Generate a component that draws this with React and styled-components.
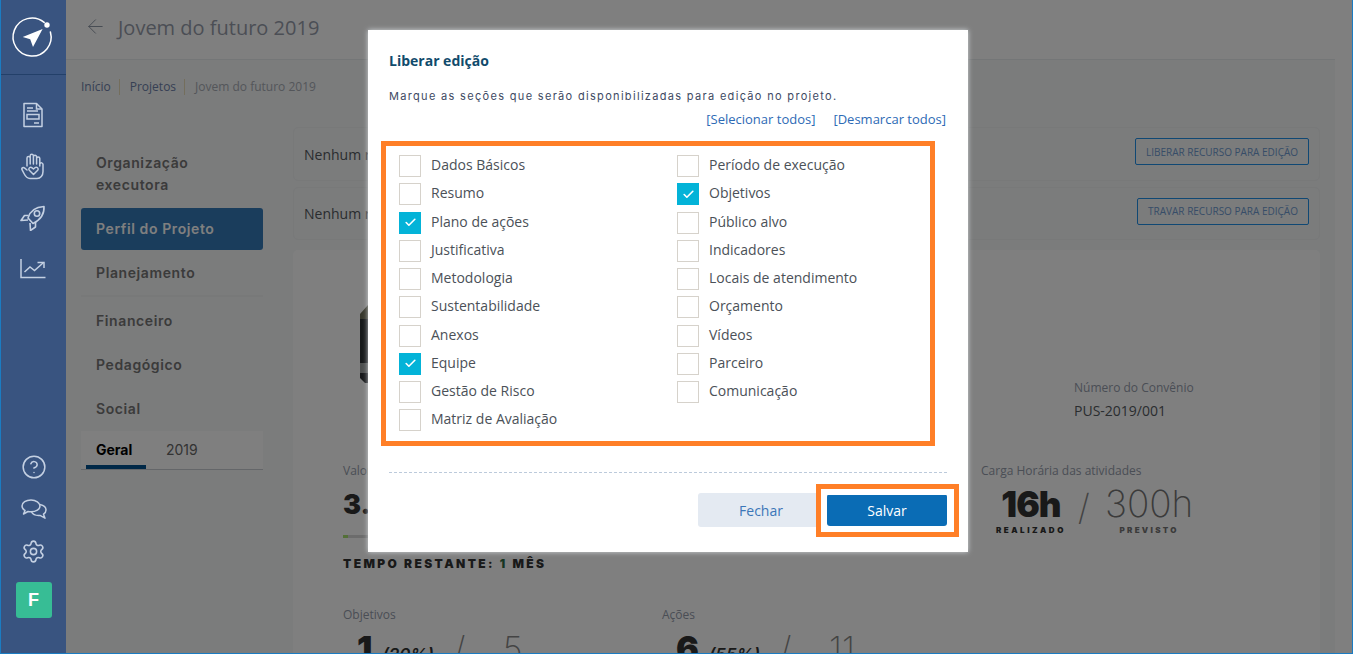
import React from 'react';
import styled, { createGlobalStyle } from 'styled-components';
import { ArrowLeft, Check, CircleHelp, Settings } from 'lucide-react';

const headingFont = `'Inter', 'Liberation Sans', sans-serif`;

const GlobalStyle = createGlobalStyle`
  html, body {
    margin: 0;
    padding: 0;
    height: 100%;
    overflow: hidden;
    font-family: 'Open Sans', 'Liberation Sans', sans-serif;
  }
  * {
    box-sizing: border-box;
  }
`;

const Frame = styled('div')`
  position: relative;
  width: 1353px;
  height: 654px;
  display: flex;
  overflow: hidden;
  background-color: #ffffff;
  border: 1px solid #1b7cc2;
  border-top: none;
`;

const Sidebar = styled('aside')`
  position: relative;
  z-index: 3;
  width: 65px;
  flex-shrink: 0;
  display: flex;
  flex-direction: column;
  align-items: center;
  background-color: #395480;
  color: #c4d0e2;
`;

const LogoBox = styled('div')`
  width: 100%;
  height: 75px;
  display: flex;
  align-items: center;
  justify-content: center;
  padding-right: 3px;
  border-bottom: 1px solid #234069;
`;

const NavIcons = styled('div')`
  display: flex;
  flex-direction: column;
  align-items: center;
  padding: 21px 2px 0 0;
  gap: 13.3px;
`;

const NavIcon = styled('div')`
  width: 36px;
  height: 38px;
  display: flex;
  align-items: center;
  justify-content: center;
`;

const BottomIcons = styled('div')`
  margin-top: auto;
  padding-bottom: 35px;
  display: flex;
  flex-direction: column;
  align-items: center;
`;

const BottomIcon = styled('div')`
  height: 42px;
  display: flex;
  align-items: center;
  justify-content: center;
`;

const Avatar = styled('div')`
  width: 36px;
  height: 36px;
  margin-top: 10px;
  border-radius: 3px;
  background-color: #37bd95;
  color: #ffffff;
  display: flex;
  align-items: center;
  justify-content: center;
  font-family: 'Liberation Sans', sans-serif;
  font-size: 18px;
  font-weight: 700;
`;

const Content = styled('main')`
  width: 1269px;
  flex-shrink: 0;
  display: flex;
  flex-direction: column;
  background-color: #f6f8f9;
`;

const Header = styled('header')`
  height: 60px;
  flex-shrink: 0;
  display: flex;
  align-items: center;
  gap: 11px;
  padding: 0 0 4px 18px;
  background-color: #ffffff;
  border-bottom: 1px solid #e9edef;
  color: #8c96a5;
`;

const BackIcon = styled(ArrowLeft)`
  margin-top: -3px;
`;

const PageTitle = styled('h1')`
  margin: 0;
  font-size: 20px;
  font-weight: 400;
  color: #979dab;
`;

const Breadcrumb = styled('nav')`
  height: 67px;
  flex-shrink: 0;
  display: flex;
  align-items: flex-start;
  padding: 19px 0 0 15px;
  font-size: 12px;
  line-height: 16px;
`;

const Crumb = styled('span')`
  padding-right: 8px;
  margin-right: 10px;
  color: ${p => (p.$current ? '#a8adb5' : '#6d80a8')};
  border-right: ${p => (p.$current ? 'none' : '1px solid #e8dcb8')};
`;

const Columns = styled('div')`
  display: flex;
  flex-shrink: 0;
  padding-left: 15px;
`;

const SideMenu = styled('div')`
  width: 182px;
  flex-shrink: 0;
  padding-top: 14px;
  display: flex;
  flex-direction: column;
`;

const MenuItem = styled('div')`
  font-family: ${headingFont};
  font-size: 14px;
  font-weight: 600;
  line-height: 22px;
  letter-spacing: 0.6px;
  padding: 11px 15px;
  color: #777777;
  ${p => p.$divided && `
    padding-top: 12px;
    margin-bottom: 2px;
    border-bottom: 2px solid #f0f2f3;
  `}
`;

const ActiveItem = styled(MenuItem)`
  margin-top: 1px;
  padding: 10px 15px;
  border-radius: 3px;
  color: #ffffff;
  background-color: #347ab8;
`;

const TabBar = styled('div')`
  height: 39px;
  display: flex;
  align-items: flex-start;
  padding-left: 5px;
  background-color: #ffffff;
  border-bottom: 1px solid #c8cdd2;
`;

const Tab = styled('div')`
  width: 60px;
  height: 38px;
  margin-right: ${p => (p.$active ? '10px' : '0')};
  padding: 8px 0 0 10px;
  font-family: ${headingFont};
  font-size: 14px;
  line-height: 22px;
  font-weight: ${p => (p.$active ? 700 : 400)};
  color: ${p => (p.$active ? '#000000' : '#666666')};
  border-bottom: ${p => (p.$active ? '4px solid #00508f' : 'none')};
`;

const Panels = styled('div')`
  width: 1027px;
  margin-left: 30px;
  display: flex;
  flex-direction: column;
`;

const NoticeRow = styled('div')`
  height: ${p => p.$h}px;
  margin-bottom: ${p => p.$gap}px;
  display: flex;
  align-items: center;
  justify-content: space-between;
  padding: 0 10px;
  font-size: 14px;
  color: #555a5f;
  background-color: #f6f8f8;
  border: 1px solid #f0f2f3;
  border-radius: 5px;
`;

const OutlineButton = styled('button')`
  height: 27px;
  margin-bottom: 5px;
  padding: 0;
  width: ${p => p.$w}px;
  background: transparent;
  border: 1px solid #2090e8;
  border-radius: 2px;
  font-family: 'Open Sans', sans-serif;
  font-size: 10px;
  color: #6e9ad0;
  text-transform: uppercase;
`;

const Card = styled('section')`
  height: 440px;
  padding: 0 0 0 50px;
  background-color: #ffffff;
  border-radius: 5px 5px 0 0;
`;

const TopRow = styled('div')`
  height: 212px;
  display: flex;
  padding-top: 55px;
`;

const LogoCut = styled('div')`
  width: 731px;
  padding-left: 17px;
  flex-shrink: 0;
`;

const Agreement = styled('div')`
  padding-top: 74px;
`;

const Label = styled('div')`
  font-size: 12px;
  line-height: 18px;
  color: #959cab;
`;

const Value = styled('div')`
  margin-top: 5px;
  font-size: 14px;
  line-height: 18px;
  color: #555a5f;
`;

const StatsRow = styled('div')`
  display: flex;
`;

const ValueColumn = styled('div')`
  width: 638px;
  flex-shrink: 0;
`;

const BigNumber = styled('div')`
  margin-top: 7px;
  font-family: ${headingFont};
  font-size: 27px;
  line-height: 36px;
  font-weight: 900;
  color: #333333;
`;

const ProgressBar = styled('div')`
  margin-top: 12px;
  width: 100px;
  height: 3px;
  background-color: #d8d8d8;
`;

const ProgressFill = styled('div')`
  height: 100%;
  background-color: #a8e070;
`;

const TimeLeft = styled('div')`
  margin-top: 17px;
  font-family: ${headingFont};
  font-size: 12px;
  line-height: 18px;
  font-weight: 900;
  letter-spacing: 2.4px;
  color: #333333;
`;

const TimeValue = styled('span')`
  color: #2d6b45;
`;

const HoursRow = styled('div')`
  display: flex;
  align-items: flex-start;
  padding-left: 15px;
  margin-top: 5px;
`;

const HoursBlock = styled('div')`
  display: flex;
  flex-direction: column;
  align-items: center;
`;

const HoursBig = styled('div')`
  font-family: ${headingFont};
  font-size: ${p => (p.$thin ? '37px' : '35px')};
  line-height: 38px;
  letter-spacing: ${p => (p.$thin ? '0' : '-1px')};
  font-weight: ${p => (p.$thin ? 200 : 900)};
  color: ${p => (p.$thin ? '#777777' : '#333333')};
`;

const HoursCaption = styled('div')`
  margin-top: 1px;
  font-family: ${headingFont};
  font-size: 8px;
  line-height: 12px;
  font-weight: 900;
  letter-spacing: ${p => (p.$muted ? '2.3px' : '2.5px')};
  color: ${p => (p.$muted ? '#777777' : '#333333')};
`;

const Slash = styled('div')`
  margin: 3px 15px 0 12px;
  font-family: ${headingFont};
  font-size: 36px;
  line-height: 38px;
  font-weight: 200;
  color: #888888;
`;

const GoalsRow = styled('div')`
  margin-top: 33px;
  display: flex;
`;

const GoalColumn = styled('div')`
  width: 319px;
`;

const GoalNumbers = styled('div')`
  display: flex;
  align-items: baseline;
  padding-left: 14px;
  margin-top: 6px;
  font-family: ${headingFont};
  color: #333333;
`;

const GoalBig = styled('span')`
  font-size: 34px;
  line-height: 38px;
  font-weight: 900;
`;

const GoalPercent = styled('span')`
  margin-left: 10px;
  font-size: 17px;
  font-style: italic;
  font-weight: 600;
`;

const GoalRest = styled('span')`
  margin-left: 20px;
  font-size: 34px;
  line-height: 38px;
  font-weight: 200;
  color: #888888;
  word-spacing: 28px;
`;

const Overlay = styled('div')`
  position: absolute;
  inset: 0;
  z-index: 2;
  display: flex;
  justify-content: center;
  align-items: flex-start;
  padding: 30px 17px 0 0;
  background-color: rgba(0, 0, 0, 0.5);
`;

const Modal = styled('div')`
  position: relative;
  width: 600px;
  height: 522px;
  padding: 21px 21px 0;
  display: flex;
  flex-direction: column;
  background-color: #ffffff;
  box-shadow: 0 0 5px rgba(225, 230, 235, 0.85);
`;

const ModalTitle = styled('h2')`
  margin: 0;
  font-size: 14px;
  line-height: 20px;
  font-weight: 700;
  color: #114b6c;
`;

const ModalText = styled('p')`
  margin: 17px 0 0;
  font-family: ${headingFont};
  font-size: 11px;
  line-height: 16px;
  font-weight: 400;
  letter-spacing: 1.32px;
  color: #3e4a63;
`;

const LinkRow = styled('div')`
  margin-top: 6px;
  padding-right: 1px;
  display: flex;
  justify-content: flex-end;
  gap: 18px;
`;

const TextLink = styled('a')`
  font-size: 13px;
  line-height: 18px;
  color: #2d6ab5;
`;

const ChecklistBox = styled('div')`
  width: 554px;
  height: 305px;
  margin: 13px 0 0 -8px;
  padding: 9px 0 0 13px;
  border: 5px solid #ff7f27;
  display: grid;
  grid-template-columns: 278px 1fr;
  grid-auto-flow: column;
  grid-template-rows: repeat(10, 28.25px);
`;

const CheckRow = styled('label')`
  display: flex;
  align-items: flex-start;
  gap: 10px;
  font-size: 14px;
  line-height: 20px;
  color: #4b5158;
`;

const Box = styled('span')`
  width: 22px;
  height: 22px;
  flex-shrink: 0;
  display: flex;
  align-items: center;
  justify-content: center;
  color: #ffffff;
  background-color: ${p => (p.$checked ? '#03b3d8' : '#ffffff')};
  border: 1px solid ${p => (p.$checked ? '#03b3d8' : '#d6d2cb')};
`;

const DashedRule = styled('hr')`
  width: 100%;
  margin: 26px 0 0;
  border: none;
  border-top: 1px dashed #bccadb;
`;

const ModalFooter = styled('div')`
  position: relative;
  margin-top: 20px;
  display: flex;
  align-items: center;
  justify-content: flex-end;
  gap: 3px;
`;

const ModalButton = styled('button')`
  width: ${p => (p.$primary ? '120px' : '126px')};
  height: ${p => (p.$primary ? '32px' : '34px')};
  border: none;
  border-radius: 3px;
  font-family: 'Open Sans', sans-serif;
  font-size: 14px;
  font-weight: ${p => (p.$primary ? 500 : 400)};
  color: ${p => (p.$primary ? '#ffffff' : '#3b76b8')};
  background-color: ${p => (p.$primary ? '#0a6cb5' : '#e4eaf2')};
`;

const Highlight = styled('div')`
  position: absolute;
  top: -9px;
  right: -12px;
  width: 143px;
  height: 53px;
  border: 5px solid #ff7f27;
  background-color: transparent;
  box-shadow: inset 0 0 0 6px #ffffff;
  pointer-events: none;
`;

const LogoMark = () => (
  <svg width="46" height="46" viewBox="0 0 46 46" fill="none">
    <path d="M41.4 18A19 19 0 1 1 35.2 8.400" stroke="#fff" strokeWidth="1.5" strokeLinecap="round" />
    <circle cx="38" cy="11" r="2.700" fill="#fff" />
    <path d="M33.600 15 13.700 23l7.500 2.300L24 33z" fill="#fff" />
  </svg>
);

const DocIcon = () => (
  <svg width="22" height="26" viewBox="0 0 22 26" fill="none" stroke="currentColor" strokeWidth="1.5">
    <path d="M2 1.500h12.500L20 7v17.500H2z" strokeLinejoin="round" />
    <path d="M14.500 1.500V7H20M5 6h6M5 9h11" />
    <rect x="5" y="12.500" width="12" height="4.500" />
    <path d="M12 21h5" />
  </svg>
);

const HandIcon = () => (
  <svg width="24" height="27" viewBox="0 0 24 27" fill="none" stroke="currentColor" strokeWidth="1.5" strokeLinecap="round" strokeLinejoin="round">
    <path d="M6 13V5a1.600 1.600 0 0 1 3.200 0M9.200 11V2.800a1.600 1.600 0 0 1 3.200 0V11M12.400 11V3.800a1.600 1.600 0 0 1 3.200 0V11M15.600 11V5.500a1.600 1.600 0 0 1 3.200 0V13" />
    <path d="M18.800 10.500a1.800 1.800 0 0 1 3.200.8v7.200c0 4-2.500 7-6 7H9c-3 0-4.500-2-6-5l-2-3.800c-.8-1.700 1.500-3 2.700-1.500L6 17" />
    <path d="M12.500 21.500 8.300 17.300c-1.500-2 1-4 2.800-2.500l1.400 1.200 1.400-1.200c1.800-1.500 4.300.5 2.800 2.500z" />
  </svg>
);

const RocketIcon = () => (
  <svg width="26" height="26" viewBox="0 0 26 26" fill="none" stroke="currentColor" strokeWidth="1.6" strokeLinejoin="round">
    <path d="M8 13C10 6 16 2 24 1.500 24.500 9 20 15 13 18.500z" />
    <circle cx="17" cy="8.500" r="2.700" />
    <path d="M8.500 10.500H4.500L1 15.500l7-.5M15.500 17V22l-5 3.500-.5-7.500" />
  </svg>
);

const ChartIcon = () => (
  <svg width="26" height="20" viewBox="0 0 26 20" fill="none" stroke="currentColor" strokeWidth="1.5">
    <path d="M1 0v18.500h24.500" />
    <path d="M4.500 13 10 8l4.500 3.500L23 4" />
    <path d="M17.500 3.500H24V9" />
  </svg>
);

const ChatIcon = () => (
  <svg width="26" height="21" viewBox="0 0 26 21" fill="none" stroke="currentColor" strokeWidth="1.5" strokeLinejoin="round">
    <path d="M10 1C5 1 1 3.500 1 7c0 2 1.200 3.500 3 4.500L2.500 15l4.500-2.500c1 .2 2 .3 3 .3 5 0 9-2.500 9-5.800S15 1 10 1z" />
    <path d="M19 5.500c3.500.7 6 2.800 6 5.500 0 1.800-1 3.200-2.500 4.200l1.500 4-5-2.800c-3.500.3-7-.7-8.500-3.400" />
  </svg>
);

const items = [
  ['Dados Básicos', false], ['Resumo', false], ['Plano de ações', true], ['Justificativa', false],
  ['Metodologia', false], ['Sustentabilidade', false], ['Anexos', false], ['Equipe', true],
  ['Gestão de Risco', false], ['Matriz de Avaliação', false],
  ['Período de execução', false], ['Objetivos', true], ['Público alvo', false], ['Indicadores', false],
  ['Locais de atendimento', false], ['Orçamento', false], ['Vídeos', false], ['Parceiro', false],
  ['Comunicação', false],
];

const App = () => (
  <Frame>
    <GlobalStyle />
    <Sidebar>
      <LogoBox>
        <LogoMark />
      </LogoBox>
      <NavIcons>
        <NavIcon><DocIcon /></NavIcon>
        <NavIcon><HandIcon /></NavIcon>
        <NavIcon><RocketIcon /></NavIcon>
        <NavIcon><ChartIcon /></NavIcon>
      </NavIcons>
      <BottomIcons>
        <BottomIcon><CircleHelp size={26} strokeWidth={1.4} /></BottomIcon>
        <BottomIcon><ChatIcon /></BottomIcon>
        <BottomIcon><Settings size={25} strokeWidth={1.5} /></BottomIcon>
        <Avatar>F</Avatar>
      </BottomIcons>
    </Sidebar>

    <Content>
      <Header>
        <BackIcon size={23} strokeWidth={1} />
        <PageTitle>Jovem do futuro 2019</PageTitle>
      </Header>
      <Breadcrumb>
        <Crumb>Início</Crumb>
        <Crumb>Projetos</Crumb>
        <Crumb $current>Jovem do futuro 2019</Crumb>
      </Breadcrumb>
      <Columns>
        <SideMenu>
          <MenuItem>Organização executora</MenuItem>
          <ActiveItem>Perfil do Projeto</ActiveItem>
          <MenuItem $divided>Planejamento</MenuItem>
          <MenuItem>Financeiro</MenuItem>
          <MenuItem>Pedagógico</MenuItem>
          <MenuItem>Social</MenuItem>
          <TabBar>
            <Tab $active>Geral</Tab>
            <Tab>2019</Tab>
          </TabBar>
        </SideMenu>
        <Panels>
          <NoticeRow $h={54} $gap={6}>
            Nenhum recurso liberado
            <OutlineButton $w={174}>Liberar recurso para edição</OutlineButton>
          </NoticeRow>
          <NoticeRow $h={53} $gap={10}>
            Nenhum recurso travado
            <OutlineButton $w={172}>Travar recurso para edição</OutlineButton>
          </NoticeRow>
          <Card>
            <TopRow>
              <LogoCut>
                <svg width="8" height="78" viewBox="0 0 8 78">
                  <path d="M0 9 8 0v14H0z" fill="#6e6e58" />
                  <path d="M0 14h8v44H0z" fill="#2e3236" />
                  <path d="M0 58h8v10H0z" fill="#9a9f9f" />
                  <path d="M0 68h8v10H5l-5-5z" fill="#2e3236" />
                </svg>
              </LogoCut>
              <Agreement>
                <Label>Número do Convênio</Label>
                <Value>PUS-2019/001</Value>
              </Agreement>
            </TopRow>
            <StatsRow>
              <ValueColumn>
                <Label>Valor do Projeto</Label>
                <BigNumber>3.000,00</BigNumber>
                <ProgressBar>
                  <ProgressFill style={{ width: '5%' }} />
                </ProgressBar>
                <TimeLeft>TEMPO RESTANTE: <TimeValue>1</TimeValue> MÊS</TimeLeft>
              </ValueColumn>
              <div>
                <Label>Carga Horária das atividades</Label>
                <HoursRow>
                  <HoursBlock>
                    <HoursBig>16h</HoursBig>
                    <HoursCaption>REALIZADO</HoursCaption>
                  </HoursBlock>
                  <Slash>/</Slash>
                  <HoursBlock>
                    <HoursBig $thin>300h</HoursBig>
                    <HoursCaption $muted>PREVISTO</HoursCaption>
                  </HoursBlock>
                </HoursRow>
              </div>
            </StatsRow>
            <GoalsRow>
              <GoalColumn>
                <Label>Objetivos</Label>
                <GoalNumbers>
                  <GoalBig>1</GoalBig>
                  <GoalPercent>(20%)</GoalPercent>
                  <GoalRest>/ 5</GoalRest>
                </GoalNumbers>
              </GoalColumn>
              <GoalColumn>
                <Label>Ações</Label>
                <GoalNumbers>
                  <GoalBig>6</GoalBig>
                  <GoalPercent>(55%)</GoalPercent>
                  <GoalRest>/ 11</GoalRest>
                </GoalNumbers>
              </GoalColumn>
            </GoalsRow>
          </Card>
        </Panels>
      </Columns>
    </Content>

    <Overlay>
      <Modal>
        <ModalTitle>Liberar edição</ModalTitle>
        <ModalText>Marque as seções que serão disponibilizadas para edição no projeto.</ModalText>
        <LinkRow>
          <TextLink>[Selecionar todos]</TextLink>
          <TextLink>[Desmarcar todos]</TextLink>
        </LinkRow>
        <ChecklistBox>
          {items.map(([name, checked]) => (
            <CheckRow key={name}>
              <Box $checked={checked}>{checked && <Check size={13} strokeWidth={3} />}</Box>
              {name}
            </CheckRow>
          ))}
        </ChecklistBox>
        <DashedRule />
        <ModalFooter>
          <ModalButton>Fechar</ModalButton>
          <ModalButton $primary>Salvar</ModalButton>
          <Highlight />
        </ModalFooter>
      </Modal>
    </Overlay>
  </Frame>
);

export default App;
